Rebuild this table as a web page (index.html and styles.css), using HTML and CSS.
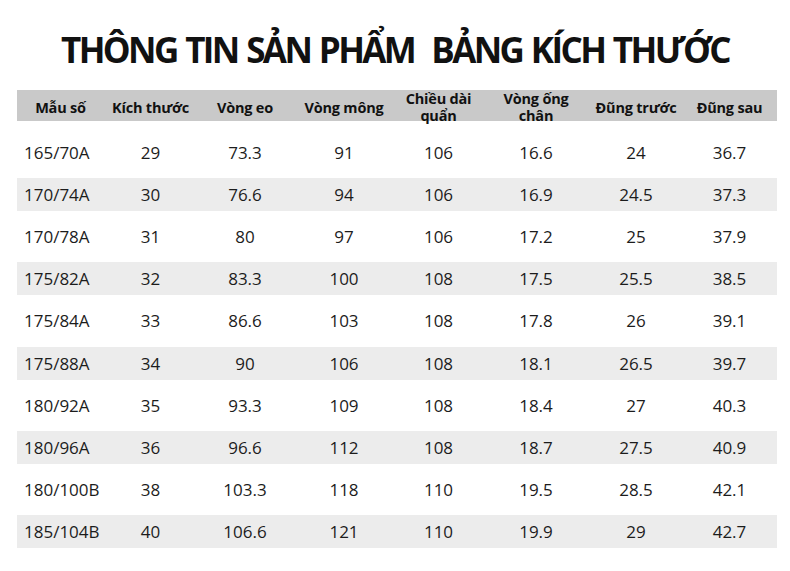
FILE: index.html
```html
<!DOCTYPE html>
<html lang="vi">
<head>
<meta charset="utf-8">
<link rel="stylesheet" href="styles.css">
</head>
<body>
<div class="page">
  <h1 class="title">THÔNG TIN SẢN PHẨM&nbsp; BẢNG KÍCH THƯỚC</h1>
  <div class="table">
    <div class="row head">
      <div class="c">Mẫu số</div>
      <div class="c">Kích thước</div>
      <div class="c">Vòng eo</div>
      <div class="c">Vòng mông</div>
      <div class="c">Chiều dài<br>quẩn</div>
      <div class="c">Vòng ống<br>chân</div>
      <div class="c">Đũng trước</div>
      <div class="c">Đũng sau</div>
    </div>
    <div class="row first"><div class="c l">165/70A</div><div class="c">29</div><div class="c">73.3</div><div class="c">91</div><div class="c">106</div><div class="c">16.6</div><div class="c">24</div><div class="c">36.7</div></div>
    <div class="row band"><div class="c l">170/74A</div><div class="c">30</div><div class="c">76.6</div><div class="c">94</div><div class="c">106</div><div class="c">16.9</div><div class="c">24.5</div><div class="c">37.3</div></div>
    <div class="row"><div class="c l">170/78A</div><div class="c">31</div><div class="c">80</div><div class="c">97</div><div class="c">106</div><div class="c">17.2</div><div class="c">25</div><div class="c">37.9</div></div>
    <div class="row band"><div class="c l">175/82A</div><div class="c">32</div><div class="c">83.3</div><div class="c">100</div><div class="c">108</div><div class="c">17.5</div><div class="c">25.5</div><div class="c">38.5</div></div>
    <div class="row"><div class="c l">175/84A</div><div class="c">33</div><div class="c">86.6</div><div class="c">103</div><div class="c">108</div><div class="c">17.8</div><div class="c">26</div><div class="c">39.1</div></div>
    <div class="row band"><div class="c l">175/88A</div><div class="c">34</div><div class="c">90</div><div class="c">106</div><div class="c">108</div><div class="c">18.1</div><div class="c">26.5</div><div class="c">39.7</div></div>
    <div class="row"><div class="c l">180/92A</div><div class="c">35</div><div class="c">93.3</div><div class="c">109</div><div class="c">108</div><div class="c">18.4</div><div class="c">27</div><div class="c">40.3</div></div>
    <div class="row band"><div class="c l">180/96A</div><div class="c">36</div><div class="c">96.6</div><div class="c">112</div><div class="c">108</div><div class="c">18.7</div><div class="c">27.5</div><div class="c">40.9</div></div>
    <div class="row"><div class="c l">180/100B</div><div class="c">38</div><div class="c">103.3</div><div class="c">118</div><div class="c">110</div><div class="c">19.5</div><div class="c">28.5</div><div class="c">42.1</div></div>
    <div class="row band"><div class="c l">185/104B</div><div class="c">40</div><div class="c">106.6</div><div class="c">121</div><div class="c">110</div><div class="c">19.9</div><div class="c">29</div><div class="c">42.7</div></div>
  </div>
</div>
</body>
</html>
```

FILE: styles.css
```css
html, body {
  margin: 0;
  padding: 0;
  background: #ffffff;
}
.page {
  width: 790px;
  height: 571px;
  font-family: "Open Sans", "Liberation Sans", sans-serif;
  color: #1a1a1a;
  padding-top: 28px;
  box-sizing: border-box;
}
.title {
  margin: 0;
  text-align: center;
  font-size: 35px;
  font-weight: 700;
  line-height: 44px;
  color: #111;
  letter-spacing: -2.6px;
  word-spacing: 2px;
  white-space: pre;
}
.table {
  margin: 18px 13px 0 17px;
  display: flex;
  flex-direction: column;
  gap: 9.1px;
}
.row {
  display: grid;
  grid-template-columns: 87px 93px 96px 102px 87px 108px 92px 95px;
  height: 33px;
  align-items: center;
  font-size: 17px;
  color: #1c1c1c;
}
.row.head {
  background: #c9c9c9;
  height: 31px;
  font-weight: 700;
  font-size: 14.5px;
  line-height: 17px;
  letter-spacing: -0.2px;
  color: #111;
}
.row.first {
  margin-top: 6px;
}
.row.band {
  background: #ececec;
}
.c {
  text-align: center;
}
.c.l {
  text-align: left;
  padding-left: 7px;
}
```
